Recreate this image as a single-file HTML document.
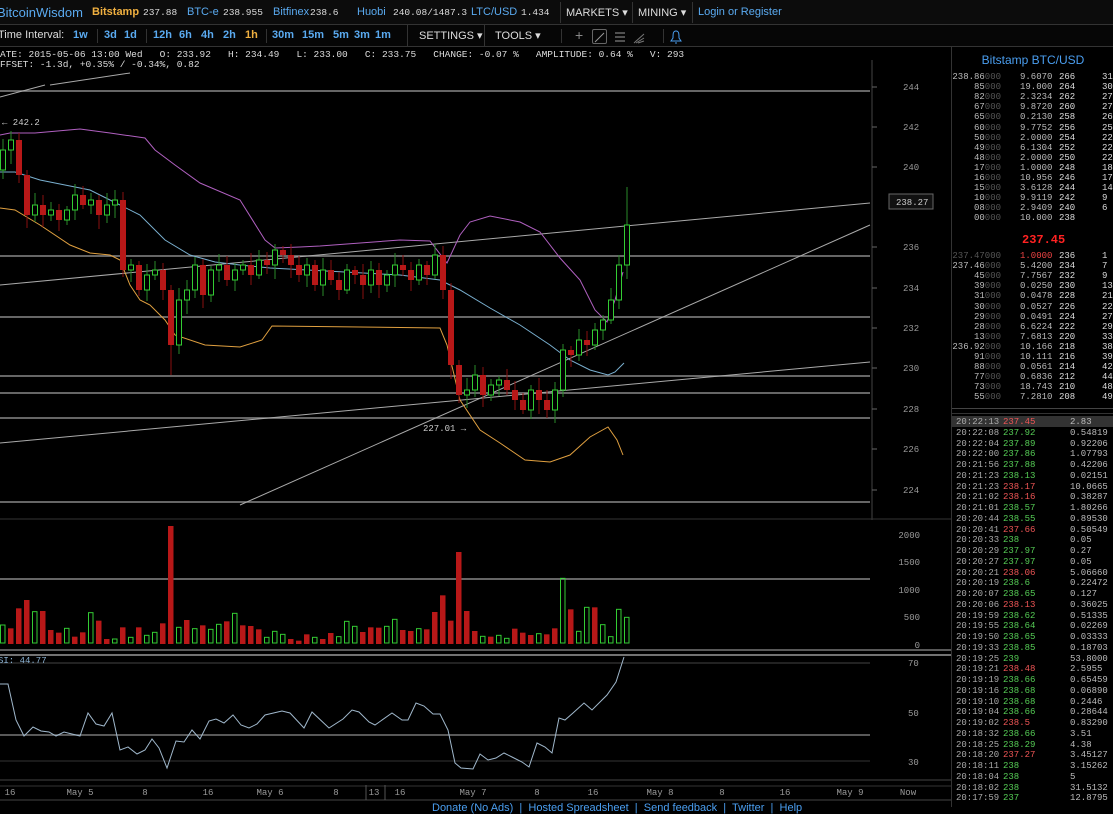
<!DOCTYPE html>
<html><head><meta charset="utf-8"><style>
*{margin:0;padding:0;box-sizing:border-box}
body{width:1113px;height:807px;background:#000;overflow:hidden;position:relative;font-family:"Liberation Sans",sans-serif;font-size:11px;color:#ccc}
.bar1{position:absolute;left:0;top:0;width:1113px;height:25px;background:#0c0c0c;border-bottom:1px solid #333;white-space:nowrap}
.bar2{position:absolute;left:0;top:25px;width:1113px;height:22px;background:#060606;border-bottom:1px solid #333;white-space:nowrap}
.t{position:absolute;top:6px}
.b{color:#5aaaf0}
.bar2 .b,.bar2 .o{font-weight:bold}
.w{color:#ddd}
.o{color:#f0b040}
.m{font-family:"Liberation Mono",monospace;font-size:9.5px;top:7px}
.sep{position:absolute;width:1px;background:#333}
#ob{position:absolute;left:951px;top:47px;width:162px;height:760px;border-left:1px solid #333;font-family:"Liberation Mono",monospace;font-size:9px}
.r{position:absolute;height:11px;line-height:11px;white-space:pre}
</style></head><body>
<div class="bar1">
<span class="t b" style="left:-3px;top:5px;font-size:13px">BitcoinWisdom</span>
<span class="t o" style="left:92px;font-weight:bold">Bitstamp</span><span class="t w m" style="left:143px">237.88</span>
<span class="t b" style="left:187px">BTC-e</span><span class="t w m" style="left:223px">238.955</span>
<span class="t b" style="left:273px">Bitfinex</span><span class="t w m" style="left:310px">238.6</span>
<span class="t b" style="left:357px">Huobi</span><span class="t w m" style="left:393px">240.08/1487.3</span>
<span class="t b" style="left:471px">LTC/USD</span><span class="t w m" style="left:521px">1.434</span>
<div class="sep" style="left:560px;top:2px;height:21px"></div>
<span class="t w" style="left:566px">MARKETS ▾</span>
<div class="sep" style="left:632px;top:2px;height:21px"></div>
<span class="t w" style="left:638px">MINING ▾</span>
<div class="sep" style="left:692px;top:2px;height:21px"></div>
<span class="t b" style="left:698px">Login or Register</span>
</div>
<div class="bar2">
<span class="t w" style="left:-2px;top:4px">Time Interval:</span>
<span class="t b" style="left:73px;top:4px">1w</span>
<div class="sep" style="left:97px;top:4px;height:14px"></div>
<span class="t b" style="left:104px;top:4px">3d</span><span class="t b" style="left:124px;top:4px">1d</span>
<div class="sep" style="left:146px;top:4px;height:14px"></div>
<span class="t b" style="left:153px;top:4px">12h</span><span class="t b" style="left:179px;top:4px">6h</span><span class="t b" style="left:201px;top:4px">4h</span><span class="t b" style="left:223px;top:4px">2h</span><span class="t o" style="left:245px;top:4px">1h</span>
<div class="sep" style="left:266px;top:4px;height:14px"></div>
<span class="t b" style="left:272px;top:4px">30m</span><span class="t b" style="left:302px;top:4px">15m</span><span class="t b" style="left:333px;top:4px">5m</span><span class="t b" style="left:354px;top:4px">3m</span><span class="t b" style="left:375px;top:4px">1m</span>
<div class="sep" style="left:407px;top:0;height:22px"></div>
<span class="t w" style="left:419px;top:4px">SETTINGS ▾</span>
<div class="sep" style="left:484px;top:0;height:22px"></div>
<span class="t w" style="left:495px;top:4px">TOOLS ▾</span>
<div class="sep" style="left:561px;top:4px;height:14px"></div>
<span class="t" style="left:575px;top:2px;font-size:14px;color:#888">+</span>
<div style="position:absolute;left:592px;top:4px;width:15px;height:15px;border:1px solid #666;border-radius:2px"></div>
<svg style="position:absolute;left:590px;top:2px" width="100" height="20"><line x1="5" y1="15" x2="14" y2="6" stroke="#999"/><path d="M25 6h10M25 10h10M25 14h10" stroke="#999"/><path d="M44 16l10-9M46 16l8-5M48 16l6-2" stroke="#777"/><path d="M86 4c-3 0-3 3-3 7l-2 3h10l-2-3c0-4 0-7-3-7zM85 16h2" stroke="#4a9ef0" fill="none"/></svg>
<div class="sep" style="left:663px;top:4px;height:14px"></div>
</div>
<div class="m" style="position:absolute;left:0;top:50px;color:#ddd;font-size:9.5px;white-space:pre;line-height:10px">ATE: 2015-05-06 13:00 Wed   O: 233.92   H: 234.49   L: 233.00   C: 233.75   CHANGE: -0.07 %   AMPLITUDE: 0.64 %   V: 293
FFSET: -1.3d, +0.35% / -0.34%, 0.82</div>
<svg id="ch" style="position:absolute;left:0;top:0" width="951" height="807"></svg>
<div style="position:absolute;left:432px;top:802px;color:#4a9ef0;font-size:11px;white-space:pre">Donate (No Ads)  |  Hosted Spreadsheet  |  Send feedback  |  Twitter  |  Help</div>
<div id="ob">
<div style="position:absolute;left:0;width:162px;top:6px;text-align:center;color:#4a9ef0;font-family:'Liberation Sans',sans-serif;font-size:12px">Bitstamp BTC/USD</div>
<div id="rows"></div>
</div>
<script>
(function(){
var s='';
function L(x1,y1,x2,y2,c,w){s+='<line x1="'+x1+'" y1="'+y1+'" x2="'+x2+'" y2="'+y2+'" stroke="'+c+'" stroke-width="'+(w||1)+'"/>';}
function T(x,y,t,c,a){s+='<text x="'+x+'" y="'+y+'" fill="'+(c||'#bbb')+'" font-family="Liberation Mono,monospace" font-size="9" '+(a?'text-anchor="'+a+'"':'')+'>'+t+'</text>';}
function P(pts,c){s+='<polyline fill="none" stroke="'+c+'" stroke-width="1" points="'+pts+'"/>';}
[91,256,317,376,393,418,502].forEach(function(y){L(0,y,870,y,'#888',1.5)});
L(0,285,870,203,'#aaa');L(240,505,870,225,'#aaa');L(0,443,870,362,'#aaa');L(0,97,45,85,'#aaa');L(50,85,130,73,'#aaa');
P('0,135,10,133,35,133,80,129,110,133,145,138,155,150,175,165,200,183,240,200,265,240,275,248,300,247,320,246,400,240,430,241,447,263,460,235,470,222,490,216,520,222,540,232,560,258,580,280,595,310,607,322,615,300,623,272','#b060c0');
P('0,172,15,172,40,180,80,188,90,190,110,200,140,215,165,240,190,255,215,262,240,265,270,268,400,275,440,280,460,290,490,308,520,325,550,345,570,360,590,370,608,375,615,372,624,363','#7ab0d0');
P('0,208,15,210,40,225,70,245,90,253,110,255,120,260,130,285,140,300,150,305,165,320,175,335,205,345,240,347,262,340,272,326,440,328,447,345,460,400,480,430,500,443,525,460,550,462,570,455,590,437,608,427,617,440,623,455','#e0a040');
var c=[170,150,140,175,215,205,215,210,220,210,195,205,200,215,205,200,270,265,290,275,270,290,345,300,290,265,295,270,265,280,270,265,275,260,265,250,255,265,275,265,285,270,280,290,270,275,285,270,285,275,265,270,280,265,275,255,290,365,395,390,375,395,385,380,390,400,410,390,400,410,390,350,355,340,345,330,320,300,265,225];
for(var i=1;i<c.length;i++){var x=8*(i-1)+3,o=c[i-1],cl=c[i],hi=Math.min(o,cl)-4-((i*7)%9),lo=Math.max(o,cl)+4+((i*5)%11);
if(i==79)hi=187; if(i==22)lo=375;
var g=cl<o;L(x,hi,x,lo,g?'#2a8a2a':'#8a1010');
var ty=Math.min(o,cl),h=Math.max(Math.abs(o-cl),2);
if(g)s+='<rect x="'+(x-2.5)+'" y="'+ty+'" width="5" height="'+h+'" fill="#000" stroke="#3c3"/>';else s+='<rect x="'+(x-3)+'" y="'+ty+'" width="6" height="'+h+'" fill="#b81818"/>';}
T(2,125,'← 242.2','#ccc');T(423,431,'227.01 →','#ccc');
L(872,60,872,520,'#444');
[[244,87],[242,127],[240,167],[236,247],[234,288],[232,328],[230,368],[228,409],[226,449],[224,490]].forEach(function(a){T(903,a[1]+3,a[0],'#999');L(872,a[1],877,a[1],'#666')});
s+='<rect x="889" y="194" width="44" height="15" fill="#111" stroke="#666"/>';T(896,205,'238.27','#ccc');
L(0,519,951,519,'#333');
L(0,579,870,579,'#ccc');
var v='315g325r265r240r275g273r330r338r325g350r337r278g302r357r357g322r352g322r346g337g310r18r322g300r326g316r328g313g304r280g316r318r328r352g334g343g357r362r343r352g357r339r350g304g319g336r322r323r319g298g330r333r326g328r276r226r302r96r273r333r349g350r346g355g326r338r345r341g343r325r175g268r334g262g262r314g350g268g292g'.match(/\d+[gr]/g);
v.forEach(function(e,i){var t=520+parseInt(e)/3,x=8*i;if(e.slice(-1)=='g')s+='<rect x="'+(x+0.5)+'" y="'+t+'" width="4.5" height="'+(643-t)+'" fill="none" stroke="#3c3"/>';else s+='<rect x="'+x+'" y="'+t+'" width="5.5" height="'+(644-t)+'" fill="#b81818"/>';});
[[2000,535],[1500,562],[1000,590],[500,617],[0,645]].forEach(function(a){T(920,a[1]+3,a[0],'#999','end')});
L(0,650,951,650,'#777',1.5);L(0,655,951,655,'#999',1.5);L(0,663,870,663,'#444');L(0,735,870,735,'#777',1.5);L(0,761,870,761,'#333');
T(-2,663,'SI: 44.77','#8ab0d0');
P('0,684,8,684,16,720,24,736,33,727,41,731,49,732,56,736,64,732,80,736,88,713,96,724,104,726,112,713,120,750,128,747,137,754,145,750,152,739,159,748,167,768,176,741,184,742,192,730,200,739,209,721,216,719,224,723,233,715,241,725,249,728,257,724,265,715,282,711,290,713,304,728,312,712,329,728,343,719,352,710,359,712,369,722,375,725,392,713,402,720,408,720,416,703,424,706,433,714,440,714,448,730,455,763,461,768,473,769,480,754,488,760,496,758,504,753,512,757,522,762,529,767,537,743,545,747,552,753,559,718,565,720,573,713,584,703,592,710,607,695,616,682,624,657','#a0b8cc');
[[70,663],[50,713],[30,762]].forEach(function(a){T(908,a[1]+3,a[0],'#999')});
L(0,780,951,780,'#444');L(0,786,951,786,'#333');L(0,800,951,800,'#444');
[[10,'16'],[80,'May 5'],[145,'8'],[208,'16'],[270,'May 6'],[336,'8'],[374,'13'],[400,'16'],[473,'May 7'],[537,'8'],[593,'16'],[660,'May 8'],[722,'8'],[785,'16'],[850,'May 9'],[908,'Now']].forEach(function(a){T(a[0],795,a[1],'#999','middle')});
L(366,785,366,800,'#555');L(385,785,385,800,'#555');
document.getElementById('ch').innerHTML=s;
var asks=[['238.86','9.6070','266','31'],['85','19.000','264','30'],['82','2.3234','262','27'],['67','9.8720','260','27'],['65','0.2130','258','26'],['60','9.7752','256','25'],['50','2.0000','254','22'],['49','6.1304','252','22'],['48','2.0000','250','22'],['17','1.0000','248','18'],['16','10.956','246','17'],['15','3.6128','244','14'],['10','9.9119','242','9'],['08','2.9409','240','6'],['00','10.000','238','']];
var bids=[['237.47','1.0000','236','1'],['237.46','5.4200','234','7'],['45','7.7567','232','9'],['39','0.0250','230','13'],['31','0.0478','228','21'],['30','0.0527','226','22'],['29','0.0491','224','27'],['28','6.6224','222','29'],['13','7.6813','220','33'],['236.92','10.166','218','38'],['91','10.111','216','39'],['88','0.0561','214','42'],['77','0.6836','212','44'],['73','18.743','210','48'],['55','7.2810','208','49']];
var h='';
function row(y,a,pc,ac){h+='<div class="r" style="top:'+y+'px;left:0;width:49px;text-align:right;color:'+pc+'">'+a[0]+'<span style="color:#555">000</span></div>';
h+='<div class="r" style="top:'+y+'px;left:68px;color:'+ac+'">'+a[1]+'</div><div class="r" style="top:'+y+'px;left:107px;color:#ddd">'+a[2]+'</div><div class="r" style="top:'+y+'px;left:150px;color:#ddd">'+a[3]+'</div>';}
asks.forEach(function(a,i){row(25+i*10.1,a,'#bbb','#bbb')});
h+='<div class="r" style="top:188px;left:70px;color:#f22;font-size:12px;font-weight:bold">237.45</div>';
bids.forEach(function(a,i){row(204+i*10.1,a,i==0?'#555':'#bbb',i==0?'#e44':'#bbb')});
h+='<div style="position:absolute;left:0;top:361px;width:162px;border-top:1px solid #444"></div><div style="position:absolute;left:0;top:366px;width:162px;border-top:1px solid #333"></div>';
var tr=[['20:22:13','237.45','2.83','r'],['20:22:08','237.92','0.54819','g'],['20:22:04','237.89','0.92206','g'],['20:22:00','237.86','1.07793','g'],['20:21:56','237.88','0.42206','g'],['20:21:23','238.13','0.02151','g'],['20:21:23','238.17','10.0665','r'],['20:21:02','238.16','0.38287','r'],['20:21:01','238.57','1.80266','g'],['20:20:44','238.55','0.89530','g'],['20:20:41','237.66','0.50549','r'],['20:20:33','238','0.05','g'],['20:20:29','237.97','0.27','g'],['20:20:27','237.97','0.05','g'],['20:20:21','238.06','5.06660','r'],['20:20:19','238.6','0.22472','g'],['20:20:07','238.65','0.127','g'],['20:20:06','238.13','0.36025','r'],['20:19:59','238.62','0.51335','g'],['20:19:55','238.64','0.02269','g'],['20:19:50','238.65','0.03333','g'],['20:19:33','238.85','0.18703','g'],['20:19:25','239','53.8000','g'],['20:19:21','238.48','2.5955','r'],['20:19:19','238.66','0.65459','g'],['20:19:16','238.68','0.06890','g'],['20:19:10','238.68','0.2446','g'],['20:19:04','238.66','0.28644','g'],['20:19:02','238.5','0.83290','r'],['20:18:32','238.66','3.51','g'],['20:18:25','238.29','4.38','g'],['20:18:20','237.27','3.45127','r'],['20:18:11','238','3.15262','g'],['20:18:04','238','5','g'],['20:18:02','238','31.5132','g'],['20:17:59','237','12.8795','g']];
tr.forEach(function(a,i){var y=370+i*10.75;if(i==0)h+='<div style="position:absolute;left:0;top:'+(y-1)+'px;width:162px;height:11px;background:#333"></div>';
h+='<div class="r" style="top:'+y+'px;left:4px;color:#aaa">'+a[0]+'</div><div class="r" style="top:'+y+'px;left:51px;color:'+(a[3]=='r'?'#e55':'#5c5')+'">'+a[1]+'</div><div class="r" style="top:'+y+'px;left:118px;color:#bbb">'+a[2]+'</div>';});
document.getElementById('rows').innerHTML=h;
})();
</script>
</body></html>
